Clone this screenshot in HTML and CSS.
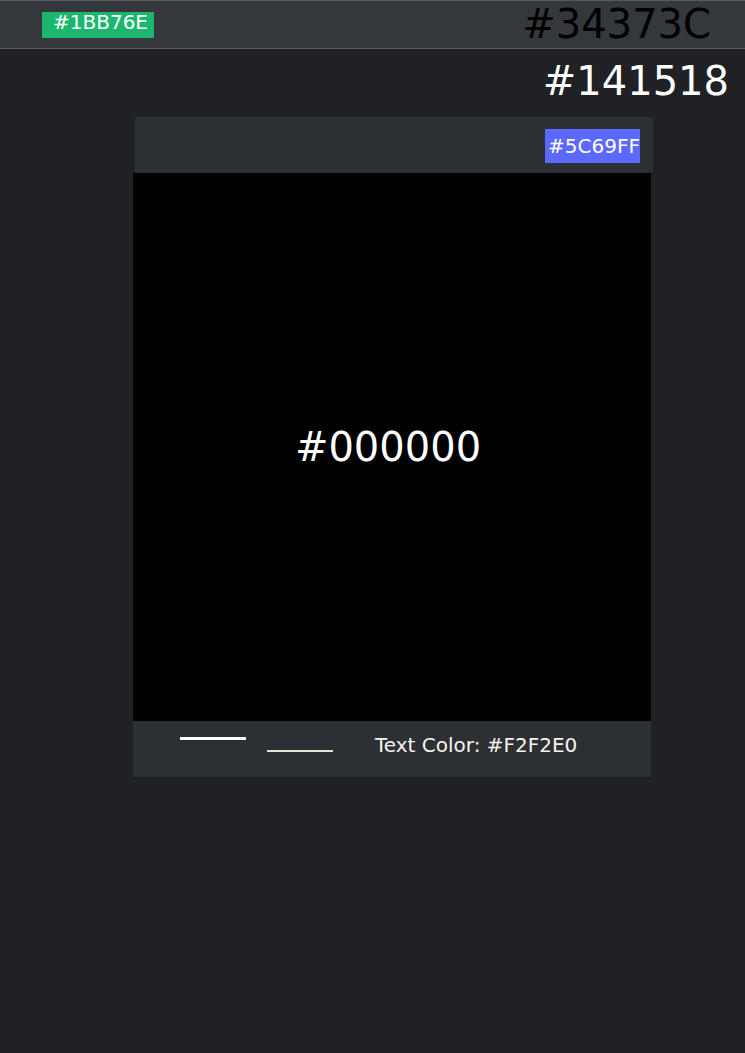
FILE: index.html
```html
<!DOCTYPE html>
<html>
<head>
<meta charset="utf-8">
<link rel="stylesheet" href="styles.css">
</head>
<body>
<header class="topbar">
  <div class="badge-green">#1BB76E</div>
  <div class="topbar-title">#34373C</div>
</header>
<div class="page-label">#141518</div>
<main class="card">
  <div class="card-header">
    <div class="badge-blue">#5C69FF</div>
  </div>
  <div class="card-body">#000000</div>
  <div class="card-footer">
    <span class="line-thick"></span>
    <span class="line-thin"></span>
    <span class="footer-text">Text Color: #F2F2E0</span>
  </div>
</main>
</body>
</html>
```

FILE: styles.css
```css
html, body {
  margin: 0;
  padding: 0;
}
body {
  background: #202124;
  font-family: "DejaVu Sans", sans-serif;
  min-height: 1053px;
}
.topbar {
  height: 47px;
  background: #34373c;
  border-top: 1px solid #55585d;
  border-bottom: 1px solid #5a5c60;
  display: flex;
  align-items: flex-start;
  justify-content: space-between;
}
.badge-green {
  margin-top: 11px;
  margin-left: 42px;
  width: 112px;
  height: 26px;
  box-sizing: border-box;
  padding-left: 11px;
  background: #1bb76e;
  color: #ffffff;
  font-size: 20px;
  line-height: 21px;
}
.topbar-title {
  font-size: 40px;
  line-height: 46px;
  color: #000000;
  margin-right: 34px;
}
.page-label {
  margin-top: 9px;
  text-align: right;
  padding-right: 16px;
  font-size: 40px;
  line-height: 46px;
  color: #ffffff;
}
.card {
  margin-top: 13px;
  margin-left: 133px;
  width: 518px;
}
.card-header {
  margin-left: 2px;
  margin-right: -2px;
  height: 55px;
  border-bottom: 1px solid #27292d;
  background: #2c2f33;
  display: flex;
  justify-content: flex-end;
  align-items: flex-start;
}
.badge-blue {
  margin-top: 12px;
  margin-right: 13px;
  width: 95px;
  height: 34px;
  box-sizing: border-box;
  padding-left: 3px;
  background: #5c69ff;
  color: #ffffff;
  font-size: 20px;
  line-height: 34px;
  white-space: nowrap;
}
.card-body {
  height: 548px;
  background: #000000;
  color: #ffffff;
  font-size: 40px;
  display: flex;
  align-items: center;
  justify-content: center;
  padding-right: 8px;
  box-sizing: border-box;
}
.card-footer {
  height: 56px;
  background: #2c2f33;
  display: flex;
  align-items: flex-start;
  padding-left: 47px;
}
.line-thick {
  display: block;
  width: 66px;
  height: 3px;
  margin-top: 16px;
  background: #ffffff;
}
.line-thin {
  display: block;
  width: 66px;
  height: 2px;
  margin-top: 29px;
  margin-left: 21px;
  background: #e6e6d4;
}
.footer-text {
  display: block;
  margin-top: 12px;
  margin-left: 42px;
  font-size: 20px;
  color: #f5f5ee;
}
```
